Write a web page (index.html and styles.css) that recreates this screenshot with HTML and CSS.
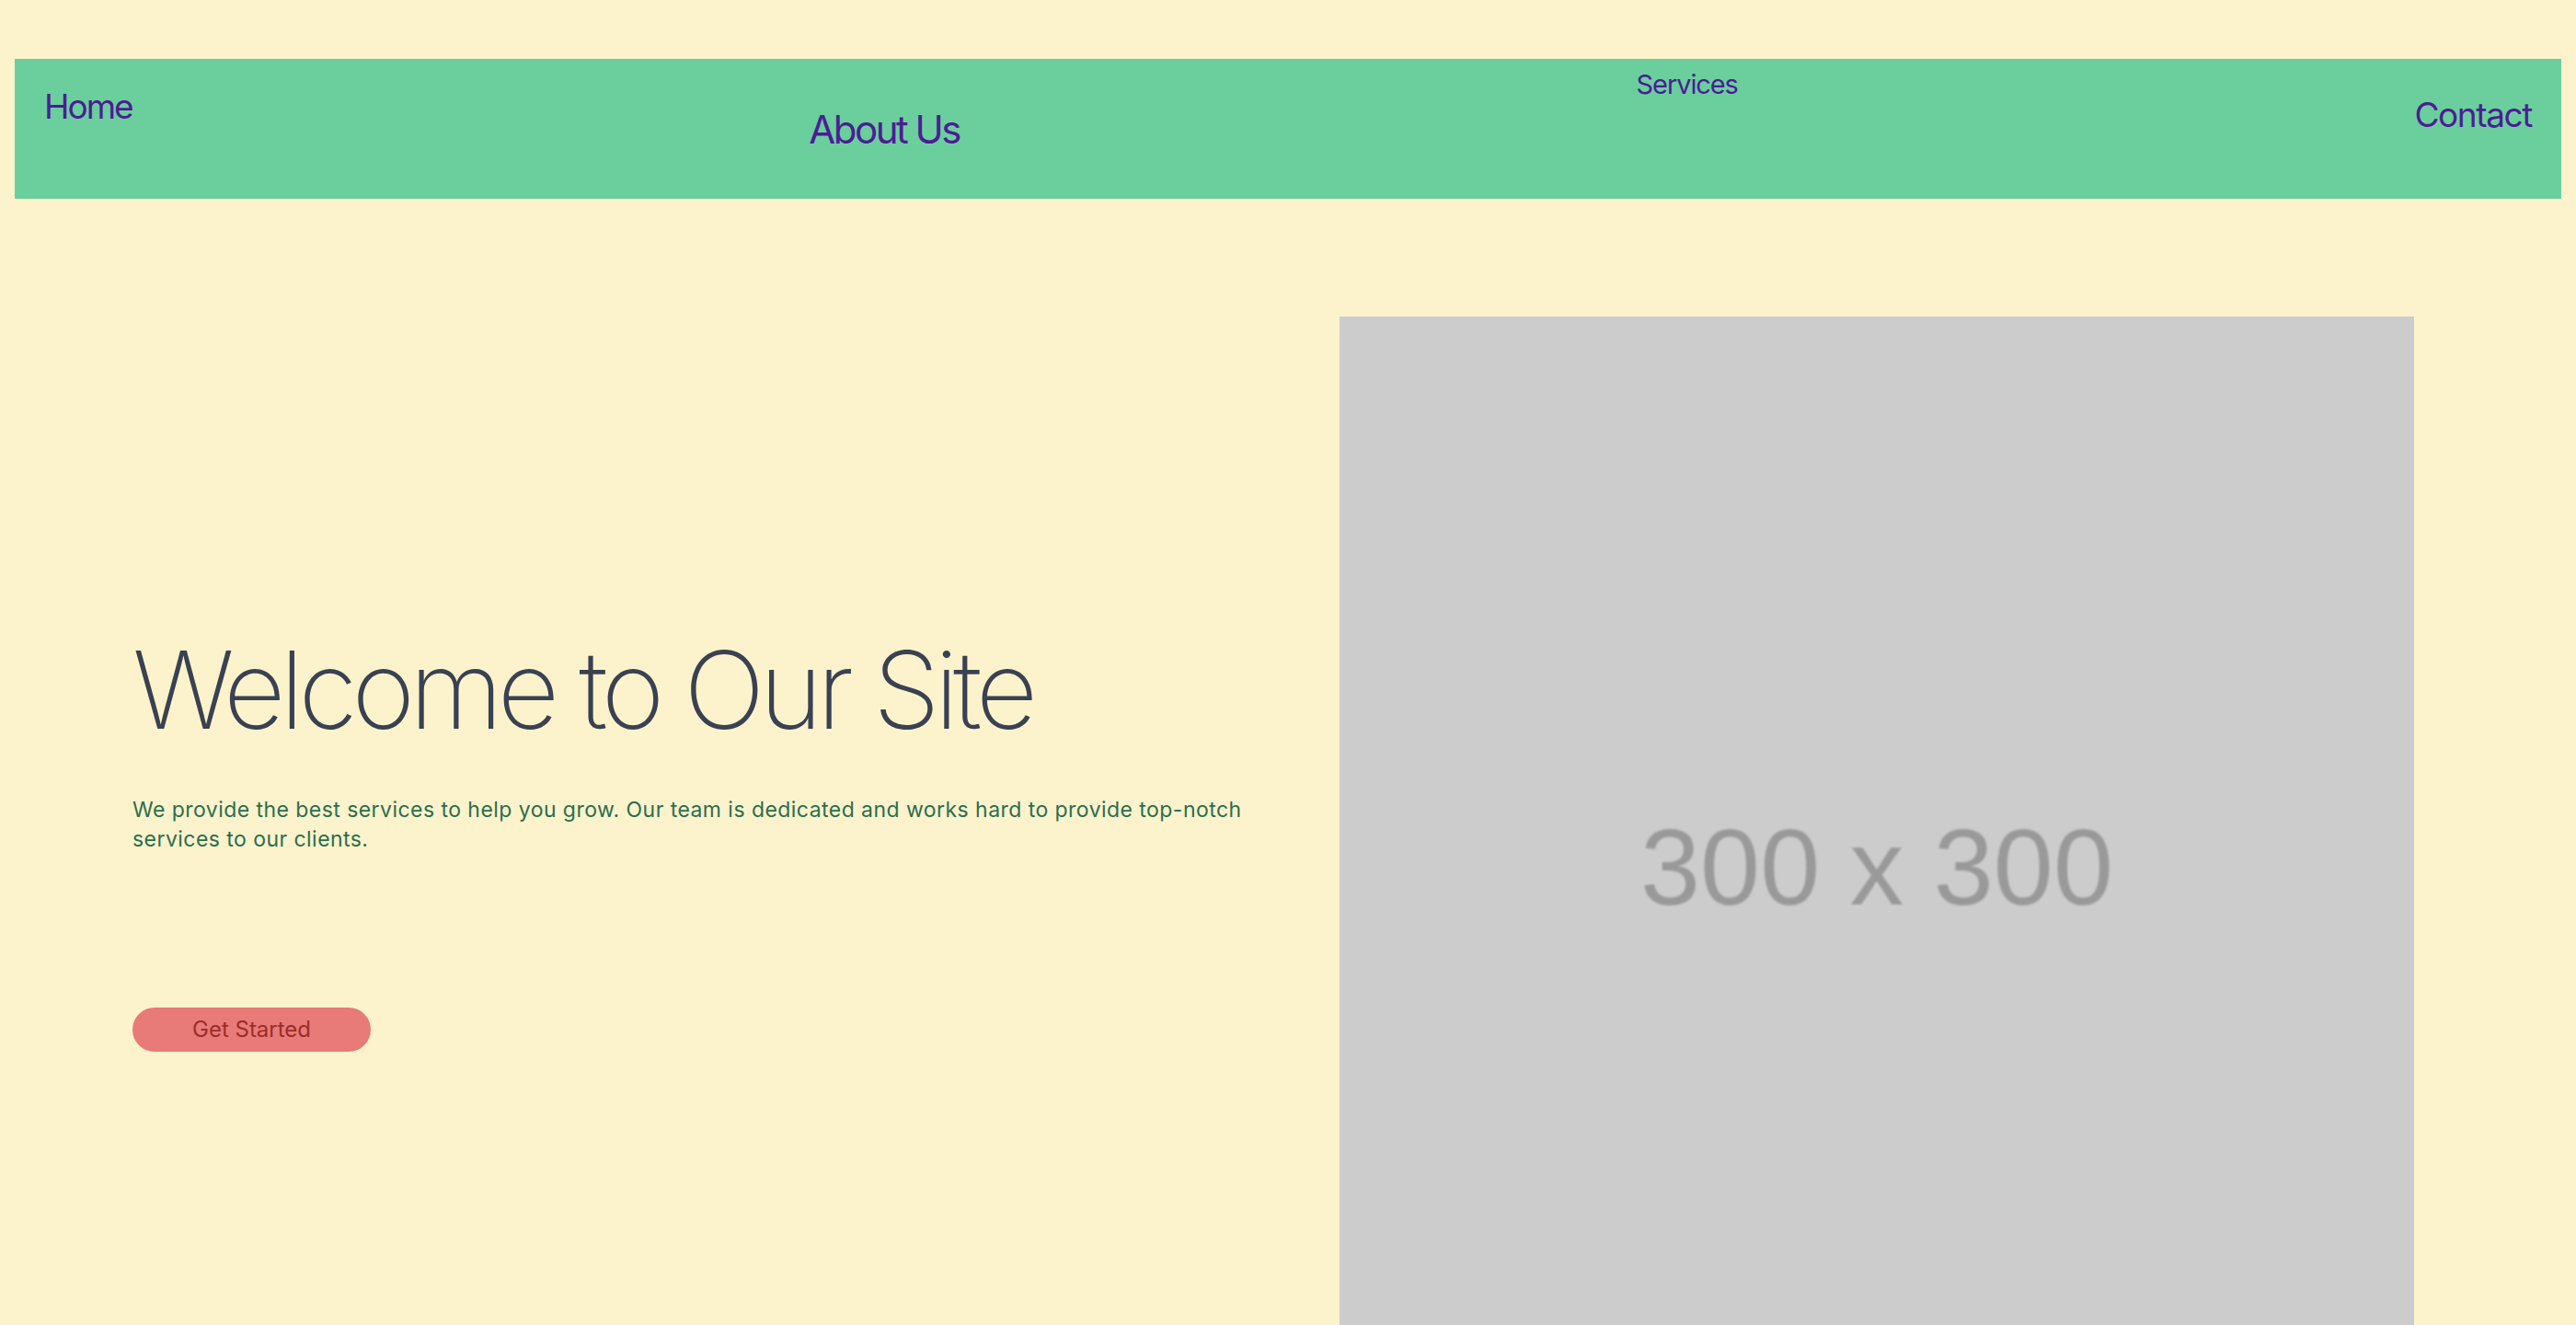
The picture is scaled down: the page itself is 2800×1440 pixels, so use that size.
FILE: index.html
```html
<!DOCTYPE html>
<html lang="en">
<head>
<meta charset="utf-8">
<title>Welcome</title>
<link rel="stylesheet" href="styles.css">
</head>
<body>
<div class="page">
  <nav class="nav">
    <a class="nav-link nav-home" href="#">Home</a>
    <a class="nav-link nav-about" href="#">About Us</a>
    <a class="nav-link nav-services" href="#">Services</a>
    <a class="nav-link nav-contact" href="#">Contact</a>
  </nav>
  <section class="hero">
    <div class="hero-text">
      <h1 class="hero-title">Welcome to Our Site</h1>
      <p class="hero-copy">We provide the best services to help you grow. Our team is dedicated and works hard to provide top-notch services to our clients.</p>
      <a class="hero-button" href="#">Get Started</a>
    </div>
    <div class="hero-image"><span class="placeholder-label">300 x 300</span></div>
  </section>
</div>
</body>
</html>
```

FILE: styles.css
```css
html, body {
  margin: 0;
  padding: 0;
}
body {
  background: #fcf3cd;
  font-family: Inter, "Noto Sans", sans-serif;
}
.page {
  padding: 16px;
}
.nav {
  margin-top: 48px;
  height: 152px;
  background: #6acf9d;
  display: flex;
  justify-content: space-between;
  align-items: flex-start;
  padding: 0 32px;
}
.nav-link {
  color: #4c1d95;
  text-decoration: none;
  line-height: normal;
  font-weight: 400;
}
.nav-home {
  font-size: 37px;
  margin-top: 29px;
  letter-spacing: -2px;
}
.nav-about {
  font-size: 42px;
  margin-top: 51px;
  letter-spacing: -2.5px;
}
.nav-services {
  font-size: 29px;
  margin-top: 10px;
  letter-spacing: -1.1px;
}
.nav-contact {
  font-size: 37px;
  margin-top: 38px;
  letter-spacing: -1.4px;
}
.hero {
  margin-top: 128px;
  display: flex;
  align-items: center;
  gap: 64px;
  padding: 0 160px 0 128px;
}
.hero-text {
  flex: 1;
  display: flex;
  flex-direction: column;
  align-items: flex-start;
  padding-bottom: 34px;
}
.hero-title {
  margin: 0;
  font-size: 117px;
  font-weight: 200;
  line-height: normal;
  color: #3a4150;
  letter-spacing: -6px;
}
.hero-copy {
  margin: 44px 0 0;
  font-size: 23px;
  line-height: 32px;
  letter-spacing: 0.45px;
  color: #2b6e4c;
}
.hero-button {
  margin-top: 167px;
  height: 48px;
  line-height: 48px;
  padding: 0 65px;
  border-radius: 24px;
  background: #e87a77;
  color: #9b2c2c;
  font-size: 24px;
  text-decoration: none;
}
.hero-image {
  width: 1168px;
  height: 1168px;
  flex: none;
  background: #cccccc;
  display: flex;
  align-items: center;
  justify-content: center;
  padding-top: 29px;
  box-sizing: border-box;
}
.placeholder-label {
  font-family: "Liberation Sans", Arial, sans-serif;
  font-size: 117px;
  color: #999999;
  filter: blur(1.2px);
}
```
